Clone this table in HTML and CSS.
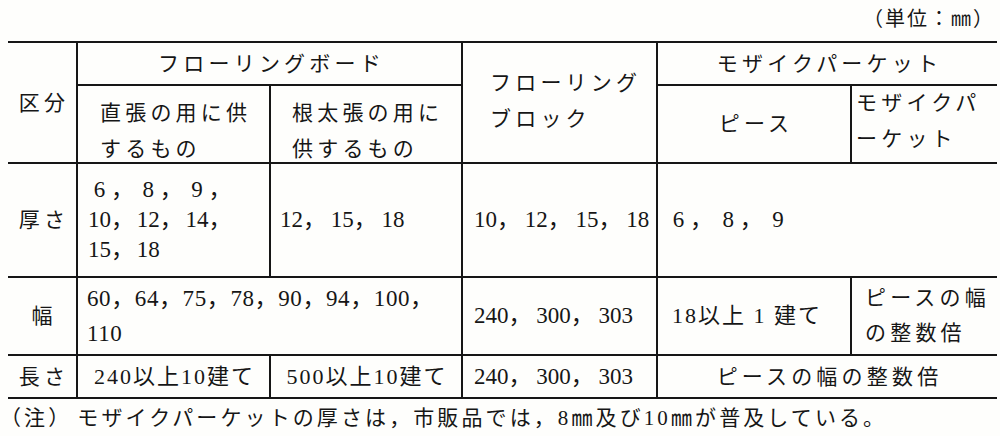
FILE: index.html
```html
<!DOCTYPE html>
<html lang="ja">
<head>
<meta charset="utf-8">
<title>フローリング寸法</title>
<link rel="stylesheet" href="styles.css">
</head>
<body>
<div class="page">
  <div class="unit">（単位：㎜）</div>
  <div class="grid">
    <div class="c center rspan"><span>区分</span></div>
    <div class="c center cspan"><span>フローリングボード</span></div>
    <div class="c rspan pl-block"><span>フローリング<br>ブロック</span></div>
    <div class="c center cspan"><span>モザイクパーケット</span></div>

    <div class="c pl-direct pt-low"><span>直張の用に供<br>するもの</span></div>
    <div class="c pl-joist pt-low"><span>根太張の用に<br>供するもの</span></div>
    <div class="c center"><span>ピース</span></div>
    <div class="c pl-mp"><span>モザイクパ<br>ーケット</span></div>

    <div class="c center"><span>厚さ</span></div>
    <div class="c num tight lh30 pl-10"><span><span class="d1">6</span>， <span class="d1">8</span>， <span class="d1">9</span>，<br>10， 12， 14，<br>15， 18</span></div>
    <div class="c num pl-9"><span>12， 15， 18</span></div>
    <div class="c num pl-11"><span>10， 12， 15， 18</span></div>
    <div class="c num mid cspan pl-9"><span><span class="d1">6</span>， <span class="d1">8</span>， <span class="d1">9</span></span></div>

    <div class="c center"><span>幅</span></div>
    <div class="c num wide lh35 cspan pl-9"><span>60，64，75，78，90，94，100，<br>110</span></div>
    <div class="c num pl-11"><span>240， 300， 303</span></div>
    <div class="c mixed pl-14"><span>18以上 1 建て</span></div>
    <div class="c lh35 pl-13"><span>ピースの幅<br>の整数倍</span></div>

    <div class="c center"><span>長さ</span></div>
    <div class="c mixed center"><span>240以上10建て</span></div>
    <div class="c mixed center"><span>500以上10建て</span></div>
    <div class="c num pl-11"><span>240， 300， 303</span></div>
    <div class="c center cspan"><span>ピースの幅の整数倍</span></div>
  </div>
  <p class="note"><span class="note-tag">（注）</span>モザイクパーケットの厚さは，市販品では，8㎜及び10㎜が普及している。</p>
</div>
</body>
</html>
```

FILE: styles.css
```css
* {
  box-sizing: border-box;
  margin: 0;
  padding: 0;
}

html,
body {
  background: #fefefc;
}

body {
  width: 1000px;
  height: 436px;
  overflow: hidden;
  font-family: "Liberation Serif", "Noto Sans CJK JP", serif;
  color: #161616;
}

.page {
  width: 1000px;
}

.unit {
  height: 41px;
  padding-right: 5px;
  text-align: right;
  font-family: "Noto Sans CJK JP", sans-serif;
  font-size: 20px;
  line-height: 36px;
  letter-spacing: 2px;
}

.grid {
  display: grid;
  grid-template-columns: 68px 191px 190px 193px 192px 145px;
  grid-template-rows: 41px 76px 112px 76px 41px;
  gap: 2px;
  padding: 2px 0;
  width: 989px;
  margin-left: 8px;
  background: #161616;
}

.c {
  display: flex;
  align-items: center;
  background: #fefefc;
  font-size: 21px;
  letter-spacing: 4.2px;
  line-height: 36px;
  white-space: nowrap;
}

.rspan {
  grid-row: span 2;
}

.cspan {
  grid-column: span 2;
}

.center {
  justify-content: center;
  text-align: center;
  padding-left: 4px;
}

.pl-block {
  padding-left: 27px;
  padding-bottom: 4px;
}

.pl-direct {
  padding-left: 22px;
}

.pl-joist {
  padding-left: 21px;
}

.pt-low {
  padding-top: 13px;
}

.pl-mp {
  padding-left: 4px;
  padding-bottom: 6px;
}

.pl-9 {
  padding-left: 9px;
}

.pl-10 {
  padding-left: 10px;
}

.pl-11 {
  padding-left: 11px;
}

.pl-13 {
  padding-left: 13px;
}

.pl-14 {
  padding-left: 14px;
}

.lh30 {
  line-height: 30px;
}

.lh35 {
  line-height: 35px;
}

.num {
  font-size: 23px;
  letter-spacing: 0;
  word-spacing: -1px;
}

.num.tight {
  word-spacing: -3px;
}

.num.mid {
  word-spacing: -2px;
}

.num.wide {
  letter-spacing: 0.6px;
  word-spacing: 0;
}

.d1 {
  display: inline-block;
  width: 1em;
  text-align: center;
}

.mixed {
  font-size: 22px;
  letter-spacing: 2px;
}

.mixed.center {
  padding-left: 2px;
}

.note {
  margin-top: 4px;
  font-size: 21px;
  line-height: 30px;
  letter-spacing: 3.1px;
  white-space: nowrap;
}

.note-tag {
  margin-right: 5px;
}
```
